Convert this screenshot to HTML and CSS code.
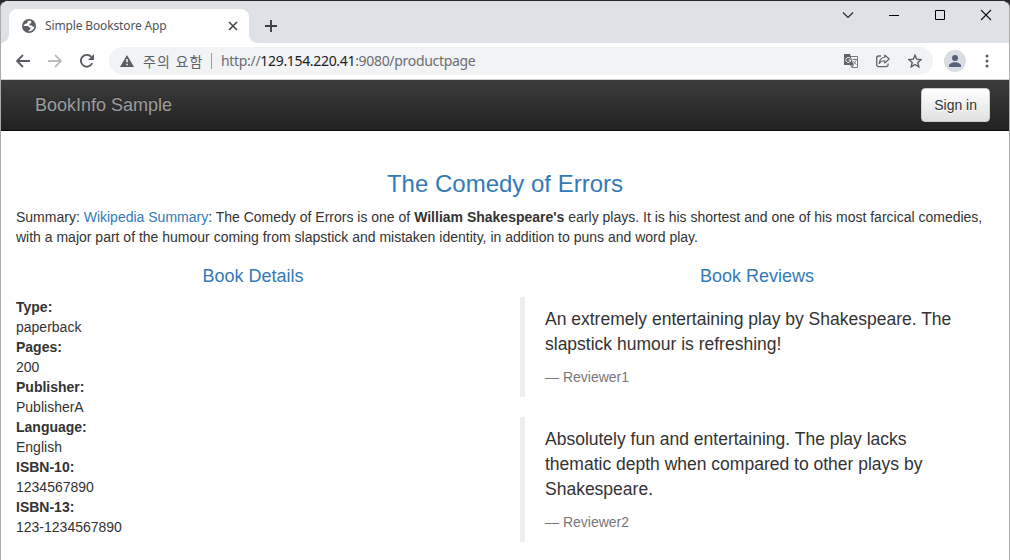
FILE: index.html
```html
<!DOCTYPE html>
<html lang="en">
<head>
<meta charset="utf-8">
<title>Simple Bookstore App</title>
<link rel="stylesheet" href="styles.css">
</head>
<body>
<div class="window">
  <header class="tabstrip">
    <div class="tab">
      <svg class="favicon" width="14" height="14" viewBox="0 0 14 14"><circle cx="7" cy="7" r="7" fill="#5a5e63"/><path d="M7.7 1.6C6.2 1.8 5.3 2.7 5.5 3.6c.2.8-.7 1-1.7 1.1C2.900 4.800 2 5.600 1.600 6.900h3.500c1.300 0 2 .7 2 1.700h1.200v1.300c0 1-.8 1.200-1.700 1.300v1.200c2.900.1 5.500-2 5.800-4.800-1.200.3-2.100-.2-2.400-1.200H7.500V4.600c1.200 0 1.800-.5 1.900-1.300.1-.7-.6-1.600-1.700-1.700z" fill="#fff"/></svg>
      <span class="tab-title">Simple Bookstore App</span>
      <svg class="tab-close" width="10" height="10" viewBox="0 0 10 10"><path d="M1 1l8 8M9 1L1 9" stroke="#45494d" stroke-width="1.600"/></svg>
    </div>
    <svg class="new-tab" width="12" height="12" viewBox="0 0 12 12"><path d="M6 0v12M0 6h12" stroke="#3c4043" stroke-width="1.900"/></svg>
    <div class="controls">
      <svg width="12" height="12" viewBox="0 0 12 12"><path d="M1 3.500l5 5 5-5" fill="none" stroke="#222" stroke-width="1.100"/></svg>
      <svg width="12" height="12" viewBox="0 0 12 12"><path d="M1 6.500h10" stroke="#000"/></svg>
      <svg width="12" height="12" viewBox="0 0 12 12"><path d="M1.500 1.500h9v9h-9z" fill="none" stroke="#000"/></svg>
      <svg width="12" height="12" viewBox="0 0 12 12"><path d="M1 1l10 10M11 1L1 11" stroke="#111" stroke-width="1.100"/></svg>
    </div>
  </header>
  <div class="toolbar">
    <svg class="back" width="14" height="14" viewBox="0 0 14 14"><path d="M14 7H1.500M7 1L1 7l6 6" fill="none" stroke="#5a5e63" stroke-width="1.800"/></svg>
    <svg class="forward" width="14" height="14" viewBox="0 0 14 14"><path d="M0 7h12.500M7 1l6 6-6 6" fill="none" stroke="#babcbe" stroke-width="1.800"/></svg>
    <svg class="reload" width="14" height="14" viewBox="0 0 14 14"><path d="M12.200 9.200A5.900 5.900 0 1 1 11.300 2.900" fill="none" stroke="#5a5e63" stroke-width="1.900"/><path d="M14 0v6H8z" fill="#5a5e63"/></svg>
    <div class="address">
      <svg class="warn" width="14" height="12" viewBox="0 0 14 12"><path d="M7 0l7 12H0z" fill="#5a5e63"/><path d="M7 4v3.300M7 8.700v1.600" stroke="#fff" stroke-width="1.500"/></svg>
      <span class="warn-text">주의 요함</span>
      <span class="divider"></span>
      <span class="url">http://<span class="host">129.154.220.41</span>:9080/productpage</span>
      <svg class="translate" width="14" height="14" viewBox="0 0 14 14"><path d="M5 2.500h8.500v11H8L6.500 11" fill="#fff" stroke="#777a7e"/><path d="M0 0h6l3.500 11H0z" fill="#5f6368"/><path d="M6.300 4.400A2.500 2.500 0 1 0 6.800 6H4.500" fill="none" stroke="#fff"/><path d="M8.300 5.500H13M10.700 4.500v1M12.200 5.800c-.5 2-1.500 3.500-3 4.500M9.200 7c.8 1.500 1.900 2.700 3.200 3.500M6.500 11h3L8 13.500" fill="none" stroke="#6b6f73" stroke-width=".9"/></svg>
      <svg class="share" width="14" height="14" viewBox="0 0 14 14"><path d="M5 2H2.500Q.7 2 .7 3.800v7Q.7 12.600 2.500 12.600h7.800q1.800 0 1.800-1.800V9.500" fill="none" stroke="#5f6368" stroke-width="1.300"/><path d="M8.700 1l4.500 4-4.500 4V6.800C6 6.700 4.400 7.600 3.200 9.500 3.500 6 5.500 3.600 8.700 3.200z" fill="none" stroke="#5f6368" stroke-width="1.100" stroke-linejoin="round"/></svg>
      <svg class="star" width="14" height="14" viewBox="0 0 14 14"><path d="M7 1.200l1.700 4 4.400.4-3.300 2.900 1 4.300L7 10.500l-3.800 2.300 1-4.300L.9 5.600l4.400-.4z" fill="none" stroke="#5a5e63" stroke-width="1.400"/></svg>
    </div>
    <svg class="avatar" width="22" height="22" viewBox="0 0 22 22"><circle cx="11" cy="11" r="11" fill="#dadde3"/><circle cx="11" cy="8" r="3" fill="#56607a"/><path d="M5 17v-1.500c0-2 3.500-3.300 6-3.300s6 1.300 6 3.300V17z" fill="#56607a"/></svg>
    <svg class="menu" width="4" height="14" viewBox="0 0 4 14"><g fill="#55595e"><circle cx="2" cy="2" r="1.500"/><circle cx="2" cy="7" r="1.500"/><circle cx="2" cy="12" r="1.500"/></g></svg>
  </div>
  <nav class="navbar">
    <a class="brand">BookInfo Sample</a>
    <button class="signin">Sign in</button>
  </nav>
  <main class="content">
    <h3>The Comedy of Errors</h3>
    <p class="summary">Summary: <a>Wikipedia Summary</a>: The Comedy of Errors is one of <b>William Shakespeare's</b> early plays. It is his shortest and one of his most farcical comedies, with a major part of the humour coming from slapstick and mistaken identity, in addition to puns and word play.</p>
    <div class="columns">
      <section>
        <h4>Book Details</h4>
        <dl>
          <dt>Type:</dt><dd>paperback</dd>
          <dt>Pages:</dt><dd>200</dd>
          <dt>Publisher:</dt><dd>PublisherA</dd>
          <dt>Language:</dt><dd>English</dd>
          <dt>ISBN-10:</dt><dd>1234567890</dd>
          <dt>ISBN-13:</dt><dd>123-1234567890</dd>
        </dl>
      </section>
      <section>
        <h4>Book Reviews</h4>
        <blockquote>
          <p>An extremely entertaining play by Shakespeare. The slapstick humour is refreshing!</p>
          <small>— Reviewer1</small>
        </blockquote>
        <blockquote>
          <p>Absolutely fun and entertaining. The play lacks thematic depth when compared to other plays by Shakespeare.</p>
          <small>— Reviewer2</small>
        </blockquote>
      </section>
    </div>
  </main>
</div>
</body>
</html>
```
FILE: styles.css
```css
* { box-sizing: border-box; }
html { background: #2b282c; }
body {
  margin: 0;
  height: 560px;
  overflow: hidden;
  font: 14px/20px "Liberation Sans", Arial, sans-serif;
  color: #333;
}
svg { display: block; flex: none; }
.window {
  height: 560px;
  border: 1px solid #aaa;
  border-top-color: #2b282c;
  border-bottom: 0;
  border-radius: 8px 8px 0 0;
  background: #fff;
  overflow: hidden;
}
.tabstrip {
  display: flex;
  height: 42px;
  padding: 8px 17px 0 8px;
  background: #dee1e6;
}
.tab {
  position: relative;
  display: flex;
  align-items: center;
  width: 240px;
  height: 34px;
  padding: 0 11px 0 13px;
  border-radius: 8px 8px 0 0;
  background: #fff;
}
.tab::before, .tab::after {
  content: "";
  position: absolute;
  bottom: 0;
  width: 8px;
  height: 8px;
}
.tab::before { left: -8px; background: radial-gradient(circle at 0 0, transparent 7.500px, #fff 8px); }
.tab::after { right: -8px; background: radial-gradient(circle at 100% 0, transparent 7.500px, #fff 8px); }
.tab-title {
  flex: 1;
  margin-left: 9px;
  font: 12px/16px "Noto Sans", sans-serif;
  letter-spacing: -.14px;
  color: #505458;
  white-space: nowrap;
}
.new-tab { margin: 11px 0 0 16px; }
.controls { display: flex; gap: 34px; margin-left: auto; }
.toolbar {
  display: flex;
  align-items: center;
  height: 37px;
  padding: 0 20px 0 15px;
  border-bottom: 1px solid #cfd0d1;
}
.forward { margin-left: 18px; }
.reload { margin-left: 18px; }
.address {
  display: flex;
  flex: none;
  align-items: center;
  width: 824px;
  height: 28px;
  margin-left: 15px;
  padding: 0 11px;
  border-radius: 14px;
  background: #f1f3f4;
  font: 14px/20px "Noto Sans", "Noto Sans CJK KR", sans-serif;
  color: #6a6e72;
  white-space: nowrap;
}
.warn-text {
  width: 61px;
  margin-left: 9px;
  font-family: "Noto Sans CJK KR", sans-serif;
  letter-spacing: 1.200px;
  color: #5f6368;
}
.divider { width: 1px; height: 16px; margin: 0 9px 0 7px; background: #9a9da1; }
.url { letter-spacing: -.32px; }
.host { color: #202124; }
.translate { margin-left: auto; }
.share, .star { margin-left: 18px; }
.avatar { margin-left: 11px; }
.menu { margin-left: auto; }
.navbar {
  display: flex;
  justify-content: space-between;
  align-items: center;
  height: 51px;
  padding: 0 19px 0 34px;
  border-bottom: 1px solid #080808;
  background: linear-gradient(#3c3c3c, #222);
}
.brand { font-size: 18px; color: #9d9d9d; text-shadow: 0 -1px 0 rgba(0,0,0,.25); }
.signin {
  height: 34px;
  padding: 6px 12px;
  border: 1px solid #ccc;
  border-radius: 4px;
  background: linear-gradient(#fff, #e0e0e0);
  color: #333;
  font: inherit;
  text-shadow: 0 1px 0 #fff;
}
.content { padding: 40px 15px 0; }
h3, h4 {
  margin: 0 0 10px;
  font-weight: 500;
  line-height: 1.1;
  text-align: center;
  color: #337ab7;
}
h3 { font-size: 24px; }
h4 { font-size: 18px; }
.summary { margin: 0 0 20px; }
.summary a { color: #337ab7; }
.columns { display: grid; grid-template-columns: 1fr 1fr; gap: 30px; }
dl { margin: 0; }
dt { font-weight: 700; }
dd { margin: 0; }
blockquote {
  margin: 0 0 20px;
  padding: 10px 20px;
  border-left: 5px solid #eee;
  font-size: 17.500px;
  line-height: 25px;
}
blockquote p { margin: 0 0 10px; }
blockquote small { display: block; font-size: 14px; line-height: 20px; color: #777; }
```
